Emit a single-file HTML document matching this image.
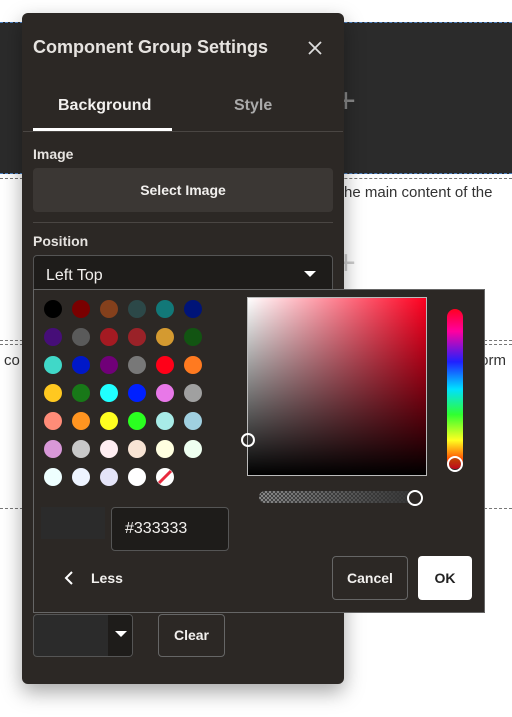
<!DOCTYPE html>
<html><head><style>
*{box-sizing:border-box;margin:0;padding:0}
body{width:512px;height:717px;background:#fff;position:relative;overflow:hidden;font-family:"Liberation Sans",sans-serif}
.a{position:absolute}
.sw{position:absolute;width:18px;height:18px;border-radius:50%}
</style></head><body>
<div class="a" style="left:0;top:22px;width:512px;height:152px;background:#2b2b2b;border-top:1px dashed #4a7fc1;border-bottom:1px dashed #4a7fc1"></div>
<div class="a" style="left:0;top:178px;width:512px;border-top:1px dashed #777"></div>
<div class="a" style="left:344px;top:184px;font-size:15px;color:#333;white-space:nowrap">he main content of the</div>
<div class="a" style="left:336px;top:82px;font-size:34px;color:#888;font-weight:100">+</div>
<div class="a" style="left:336px;top:244px;font-size:34px;color:#ccc">+</div>
<div class="a" style="left:0;top:340px;width:512px;border-top:1px dashed #777"></div>
<div class="a" style="left:0;top:344px;width:512px;border-top:1px dashed #777"></div>
<div class="a" style="left:4px;top:352px;font-size:15px;color:#333">co</div>
<div class="a" style="left:476px;top:352px;font-size:15px;color:#333">form</div>
<div class="a" style="left:0;top:508px;width:512px;border-top:1px dashed #777"></div>

<div class="a" style="left:22px;top:13px;width:322px;height:671px;background:#2c2825;border-radius:6px;box-shadow:0 8px 20px rgba(0,0,0,.35)"></div>
<div class="a" style="left:33px;top:37px;font-size:18px;font-weight:bold;color:#e6e3e0">Component Group Settings</div>
<svg class="a" style="left:307px;top:40px" width="16" height="16"><path d="M2 2L14 14M14 2L2 14" stroke="#ddd" stroke-width="1.8"/></svg>
<div class="a" style="left:58px;top:97px;font-size:16px;font-weight:bold;color:#f2f0ee">Background</div>
<div class="a" style="left:234px;top:97px;font-size:16px;font-weight:bold;color:#aaa">Style</div>
<div class="a" style="left:23px;top:131px;width:320px;height:1px;background:#4a4643"></div>
<div class="a" style="left:33px;top:128px;width:139px;height:3px;background:#fff"></div>
<div class="a" style="left:33px;top:146px;font-size:14px;font-weight:bold;color:#e6e3e0">Image</div>
<div class="a" style="left:33px;top:168px;width:300px;height:44px;background:#3b3734;border-radius:4px;color:#f2f0ee;font-size:14px;font-weight:bold;text-align:center;line-height:44px">Select Image</div>
<div class="a" style="left:33px;top:222px;width:300px;height:1px;background:#4a4643"></div>
<div class="a" style="left:33px;top:233px;font-size:14px;font-weight:bold;color:#e6e3e0">Position</div>
<div class="a" style="left:33px;top:255px;width:300px;height:40px;background:#1e1c1a;border:1px solid #555;border-radius:4px"></div>
<div class="a" style="left:46px;top:267px;font-size:16px;color:#f2f0ee">Left Top</div>
<svg class="a" style="left:304px;top:271px" width="12" height="7"><path d="M0 0H12L6 6Z" fill="#fff"/></svg>

<div class="a" style="left:33px;top:289px;width:452px;height:324px;background:#2c2825;border:1px solid #666"></div>
<div class="a" style="left:247px;top:297px;width:180px;height:179px;border:1px solid #bbb;background:linear-gradient(to top,#000,rgba(0,0,0,0)),linear-gradient(to right,#fff,#ff0020)"></div>
<div class="a" style="left:241px;top:433px;width:14px;height:14px;border:2px solid #fff;border-radius:50%"></div>
<div class="a" style="left:447px;top:309px;width:16px;height:160px;border-radius:8px;background:linear-gradient(to bottom,#ff0020,#ff00a0 14%,#2020ff 33%,#00e0ff 50%,#30ff30 66%,#ffff20 82%,#ff4000 95%,#ff0020)"></div>
<div class="a" style="left:447px;top:456px;width:16px;height:16px;border:2px solid #fff;border-radius:50%;background:rgba(40,30,30,.3)"></div>
<div class="a" style="left:259px;top:491px;width:158px;height:12px;border-radius:6px;background:linear-gradient(to right,rgba(60,60,60,0),#333),repeating-conic-gradient(#888 0 25%,#444 0 50%) 0 0/4px 4px"></div>
<div class="a" style="left:407px;top:490px;width:16px;height:16px;border:2px solid #fff;border-radius:50%;background:#2c2825"></div>
<div class="a" style="left:41px;top:507px;width:64px;height:32px;background:#2b2b2b"></div>
<div class="a" style="left:111px;top:507px;width:118px;height:44px;background:#1e1c1a;border:1px solid #555;border-radius:4px;color:#f2f0ee;font-size:16px;line-height:42px;padding-left:13px">#333333</div>
<svg class="a" style="left:64px;top:571px" width="10" height="14"><path d="M8 1L2 7L8 13" stroke="#fff" stroke-width="2" fill="none"/></svg>
<div class="a" style="left:91px;top:570px;font-size:14px;font-weight:bold;color:#f2f0ee">Less</div>
<div class="a" style="left:332px;top:556px;width:76px;height:44px;border:1px solid #666;border-radius:4px;color:#f2f0ee;font-size:14px;font-weight:bold;text-align:center;line-height:42px">Cancel</div>
<div class="a" style="left:418px;top:556px;width:54px;height:44px;background:#fff;border-radius:4px;color:#222;font-size:14px;font-weight:bold;text-align:center;line-height:44px">OK</div>

<div class="a" style="left:33px;top:614px;width:100px;height:43px;background:#2b2b2b;border:1px solid #555;border-radius:4px;overflow:hidden"><div style="position:absolute;right:0;top:0;width:24px;height:43px;background:#1e1c1a"></div></div>
<svg class="a" style="left:115px;top:631px" width="12" height="7"><path d="M0 0H12L6 6Z" fill="#fff"/></svg>
<div class="a" style="left:158px;top:614px;width:67px;height:43px;border:1px solid #666;border-radius:4px;color:#f2f0ee;font-size:14px;font-weight:bold;text-align:center;line-height:41px">Clear</div>

<div class="sw" style="left:44px;top:300px;background:#000"></div>
<div class="sw" style="left:72px;top:300px;background:#7a0000"></div>
<div class="sw" style="left:100px;top:300px;background:#84401c"></div>
<div class="sw" style="left:128px;top:300px;background:#2c4848"></div>
<div class="sw" style="left:156px;top:300px;background:#127878"></div>
<div class="sw" style="left:184px;top:300px;background:#001478"></div>
<div class="sw" style="left:44px;top:328px;background:#460e78"></div>
<div class="sw" style="left:72px;top:328px;background:#5a5a5a"></div>
<div class="sw" style="left:100px;top:328px;background:#a41a22"></div>
<div class="sw" style="left:128px;top:328px;background:#9a2228"></div>
<div class="sw" style="left:156px;top:328px;background:#d49a30"></div>
<div class="sw" style="left:184px;top:328px;background:#125412"></div>
<div class="sw" style="left:44px;top:356px;background:#40d8c8"></div>
<div class="sw" style="left:72px;top:356px;background:#0018c8"></div>
<div class="sw" style="left:100px;top:356px;background:#700078"></div>
<div class="sw" style="left:128px;top:356px;background:#787878"></div>
<div class="sw" style="left:156px;top:356px;background:#ff0018"></div>
<div class="sw" style="left:184px;top:356px;background:#ff7a20"></div>
<div class="sw" style="left:44px;top:384px;background:#ffc820"></div>
<div class="sw" style="left:72px;top:384px;background:#187818"></div>
<div class="sw" style="left:100px;top:384px;background:#20ffff"></div>
<div class="sw" style="left:128px;top:384px;background:#0020ff"></div>
<div class="sw" style="left:156px;top:384px;background:#e878e8"></div>
<div class="sw" style="left:184px;top:384px;background:#a0a0a0"></div>
<div class="sw" style="left:44px;top:412px;background:#ff8c78"></div>
<div class="sw" style="left:72px;top:412px;background:#ff9420"></div>
<div class="sw" style="left:100px;top:412px;background:#ffff20"></div>
<div class="sw" style="left:128px;top:412px;background:#2aff20"></div>
<div class="sw" style="left:156px;top:412px;background:#a8ece8"></div>
<div class="sw" style="left:184px;top:412px;background:#a0d0e0"></div>
<div class="sw" style="left:44px;top:440px;background:#d898d8"></div>
<div class="sw" style="left:72px;top:440px;background:#c8c8c8"></div>
<div class="sw" style="left:100px;top:440px;background:#ffeef2"></div>
<div class="sw" style="left:128px;top:440px;background:#f8e4d4"></div>
<div class="sw" style="left:156px;top:440px;background:#ffffe0"></div>
<div class="sw" style="left:184px;top:440px;background:#eefff0"></div>
<div class="sw" style="left:44px;top:468px;background:#eeffff"></div>
<div class="sw" style="left:72px;top:468px;background:#eef4ff"></div>
<div class="sw" style="left:100px;top:468px;background:#e4e4f8"></div>
<div class="sw" style="left:128px;top:468px;background:#fff"></div>
<svg class="a" style="left:156px;top:468px" width="18" height="18"><circle cx="9" cy="9" r="9" fill="#fff"/><path d="M3 15L15 3" stroke="#e8283c" stroke-width="3"/></svg>
</body></html>
